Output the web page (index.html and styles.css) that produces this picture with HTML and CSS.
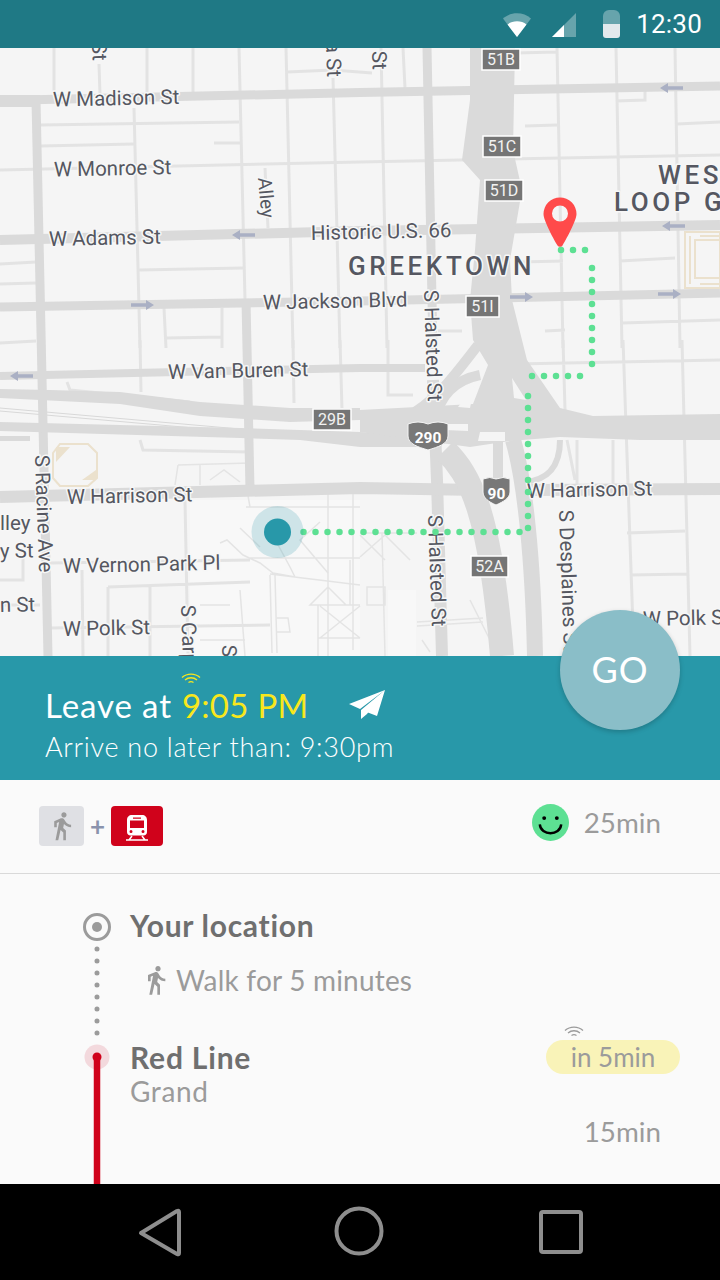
FILE: index.html
```html
<!DOCTYPE html>
<html lang="en">
<head>
<meta charset="utf-8">
<title>Route</title>
<link rel="stylesheet" href="styles.css">
</head>
<body>
<div class="app">
  <header class="status">
    <svg class="st-wifi" width="28" height="24" viewBox="0 0 28 24"><path class="a" d="M0 5.500C7.500-1.400 20.500-1.400 28 5.500L14 24Z"/><path class="w" d="M4.500 11.500C9.500 7.300 18.500 7.300 23.500 11.500L14 24Z"/></svg>
    <svg class="st-signal" width="24" height="24" viewBox="0 0 24 24"><path class="a" d="M24 0V24H0Z"/><path class="w" d="M12 12V24H0Z"/></svg>
    <svg class="st-batt" width="17" height="28" viewBox="0 0 17 28"><path class="a" d="M0 6a6 6 0 0 1 6-6h5a6 6 0 0 1 6 6v8H0Z"/><path class="w" d="M0 14H17V25a3 3 0 0 1-3 3H3a3 3 0 0 1-3-3Z"/></svg>
    <span class="clock">12:30</span>
  </header>

  <section class="map">
    <svg class="map-svg" width="720" height="608" viewBox="0 48 720 608">
      <defs>
        <g id="arrow-l"><path d="M0 0L8-5V-1.800H23V1.800H8V5Z"/></g>
        <g id="arrow-r"><path d="M23 0L15-5V-1.800H0V1.800H15V5Z"/></g>
      </defs>
      <rect class="bg" x="0" y="48" width="720" height="608"/>
      <rect class="bg2" x="190" y="500" width="170" height="156"/>
      <rect class="bg2" x="290" y="590" width="26" height="66"/>
      <rect class="bg2" x="388" y="590" width="28" height="66"/>

      <g class="mn">
        <path d="M54 48V92M99 64L100 95M147 48V92M193 48V92M239 48L245 300M286 48L293 348M333 78L340 348M134 108L140 348"/>
        <path d="M40 125L239 122M40 146L134 144M214 143H240M0 170L360 162L720 155M139 270L243 268M0 264L36 262M0 284L36 283M0 343L36 341M164 308L166 348M222 308V348M166 338L222 337M287 72L333 70L372 73M265 168L268 228"/>
        <path d="M381 48L387 348M403 48L405 88M557 48L563 348M616 48L622 348M675 48L680 348M515 53L557 52M525 126L557 125M616 101L645 100V88M677 124L720 122M620 261L675 258M622 323L720 320M520 262L563 261M545 331L565 330M438 331L462 331"/>
        <path d="M140 340L141 392M293 340L294 403M340 340L342 410M67 382L70 390L190 402M140 440L143 450L250 452"/>
        <path d="M185 500L188 656M82 570L83 656M108 587V656M150 585V656M108 587L250 582M23 557V580H0M0 605H40M50 563L250 560M50 628L270 625"/>
        <path d="M563 340L565 410M623 340L634 656M682 340L690 656M515 364L720 360M567 440L575 480M577 440V490M613 440V490M627 533L685 531M630 575L688 574M388 340V395H413"/>
      </g>
      <path class="track" d="M0 408L240 429M0 411L240 432M240 429L320 432"/>
      <g class="thin">
        <path d="M247 490L250 507M178 465L175 485M178 465L250 463M200 465V485M210 480L224 470L240 482M246 507H360"/>
        <path d="M220 543L227 540L243 555L260 563L273 573L295 577M240 528L260 547M277 543L290 567L295 577M320 522L300 540L328 573M250 558H360M270 574L360 585"/>
        <path d="M328 490V656M353 490V650M350 560V605M328 587L310 605H346ZM318 605H360M318 638H360M318 605V656M320 606L360 638M360 606L320 638"/>
        <path d="M270 575L272 653M275 575L277 653M277 618H288L290 632H277"/>
        <path d="M360 533H417M382 533L385 656M360 557L385 535L410 560M360 535L385 560M367 587H385V605H367ZM417 622L483 618M417 626L483 622M422 640L430 652M470 600L490 640"/>
        <path d="M200 605H230M200 640H245M240 590L245 656"/>
      </g>

      <g class="road" fill="none">
        <path class="r9" d="M0 100.600L360 92.500L720 86"/>
        <path class="r12" d="M0 101H40"/>
        <path class="r10" d="M0 240L360 231L720 225"/>
        <path class="r9" d="M0 307L360 301L720 293"/>
        <path class="r8" d="M0 376L360 368L425 368"/>
        <path class="r9" d="M36 100L48 656"/>
        <path class="r9" d="M246 300L250 490"/>
        <path class="r9" d="M427 48L433 350"/>
        <path class="r12" d="M433 380L437 480L442 656"/>
        <path class="r12" d="M0 497L360 488L480 490"/>
        <path class="r12" d="M530 490L720 489"/>
        <path class="r10" d="M478 345C455 375 440 395 415 412"/>
        <path class="r10" d="M480 375C455 380 440 395 435 420"/>
        <path class="r24" d="M445 450C470 475 490 510 502 656"/>
        <path class="r10" d="M498 440V478"/>
        <path class="r16" d="M513 440C525 480 533 560 535 656"/>
        <path class="r6" d="M560 440C560 470 545 480 525 482"/>
      </g>
      <path class="rf" d="M0 389L50 390L120 392L200 402L290 408L360 408L360 420L290 422L200 416L120 404L0 398Z"/>
      <path class="rf" d="M0 422L240 428L360 432L440 437L440 447L360 447L300 440L240 438L0 431Z"/>
      <path class="rf" d="M0 436H30V441H0Z"/>
      <path class="rf" d="M470 48H515L513 150L522 190L510 260L512 300L527 360L560 408L593 416L720 414V440H640L560 437L510 441L470 447L360 432V410L473 404L488 365L473 340L470 300L475 250L480 180L462 160L470 100Z"/>
      <path class="bg" d="M512 378L526 400L514 398ZM458 407L475 385L470 408ZM445 424H468V431L445 430ZM505 432H480L478 441H505Z"/>

      <g class="tan">
        <path d="M60 444H88L97 453V478L88 486H60L53 478V453Z"/>
        <rect x="685" y="232" width="35" height="56"/>
        <rect x="695" y="240" width="25" height="38"/>
        <path d="M690 236V284M700 236H720M700 284H720"/>
      </g>
      <path class="tanf" d="M56 447H70L56 462ZM96 470V480H82Z"/>

      <g class="lbl">
        <text transform="translate(53 106.500) rotate(-1.200)">W Madison St</text>
        <text transform="translate(54 176.500) rotate(-1.200)">W Monroe St</text>
        <text transform="translate(49 246) rotate(-1.200)">W Adams St</text>
        <text transform="translate(311 240) rotate(-1.200)">Historic U.S. 66</text>
        <text transform="translate(263 309.500) rotate(-1.200)">W Jackson Blvd</text>
        <text transform="translate(168 379) rotate(-1.200)">W Van Buren St</text>
        <text transform="translate(67 504) rotate(-1.200)">W Harrison St</text>
        <text transform="translate(527 498) rotate(-1.200)">W Harrison St</text>
        <text transform="translate(63 573) rotate(-1.200)">W Vernon Park Pl</text>
        <text transform="translate(63 636) rotate(-1.200)">W Polk St</text>
        <text transform="translate(643 626) rotate(-1.200)">W Polk St</text>
        <text transform="translate(0 530)">lley</text>
        <text transform="translate(0 558) rotate(-1.200)">y St</text>
        <text transform="translate(0 612) rotate(-1.200)">n St</text>
        <text transform="translate(35 455) rotate(88)">S Racine Ave</text>
        <text transform="translate(424 290) rotate(88)">S Halsted St</text>
        <text transform="translate(428 515) rotate(88)">S Halsted St</text>
        <text transform="translate(559 510) rotate(88)">S Desplaines St</text>
        <text transform="translate(181 605) rotate(88)">S Carpenter St</text>
        <text transform="translate(222 645) rotate(88)">S Morgan St</text>
        <text class="sm" transform="translate(258 178) rotate(85)">Alley</text>
        <text transform="translate(92 42) rotate(88)">St</text>
        <text transform="translate(326 42) rotate(88)">a St</text>
        <text transform="translate(372 51) rotate(88)">St</text>
      </g>
      <g class="area">
        <text transform="translate(348 275)">GREEKTOWN</text>
        <text transform="translate(658 184)">WEST</text>
        <text transform="translate(614 211)">LOOP GATE</text>
      </g>

      <g class="arr">
        <use href="#arrow-l" x="660" y="88"/>
        <use href="#arrow-l" x="232" y="235"/>
        <use href="#arrow-l" x="662" y="226"/>
        <use href="#arrow-l" x="10" y="376"/>
        <use href="#arrow-r" x="131" y="305"/>
        <use href="#arrow-r" x="510" y="297"/>
        <use href="#arrow-r" x="658" y="294"/>
      </g>

      <g class="ex">
        <rect x="482" y="49" width="38" height="21"/><text x="501" y="65">51B</text>
        <rect x="483" y="136" width="38" height="21"/><text x="502" y="152">51C</text>
        <rect x="485" y="180" width="38" height="21"/><text x="504" y="196">51D</text>
        <rect x="466" y="296" width="33" height="21"/><text x="482.500" y="312">51I</text>
        <rect x="313" y="409" width="38" height="21"/><text x="332" y="425">29B</text>
        <rect x="471" y="556" width="37" height="21"/><text x="489.500" y="572">52A</text>
      </g>
      <g class="shield">
        <path d="M408 424Q418 420 428 424Q438 420 448 424V436C448 444 438 447 428 450C418 447 408 444 408 436Z"/>
        <text x="428" y="443">290</text>
        <path class="sh2" d="M483 479Q490 476 496 479Q503 476 510 479V492C510 498 503 502 496 505C489 502 483 498 483 492Z"/>
        <text x="496.500" y="499">90</text>
      </g>

      <g class="dots">
        <path d="M303.500 532H520"/>
        <path d="M528 528V384"/>
        <path d="M532 376H592"/>
        <path d="M592 364V256"/>
        <path d="M561 250H586"/>
      </g>
      <circle class="me-o" cx="277.500" cy="532" r="26"/>
      <circle class="me" cx="277.500" cy="532" r="13.500"/>
      <path class="pin" fill-rule="evenodd" d="M560 197.500a16.500 16.500 0 0 1 16.500 16.500c0 6-9 23-14 31.500a3 3 0 0 1-5 0c-5-8.500-14-25.500-14-31.500a16.500 16.500 0 0 1 16.500-16.500Zm0 8a8 8 0 1 0 0 16a8 8 0 1 0 0-16Z"/>
    </svg>
  </section>

  <section class="banner">
    <div class="leave"><span class="lead">Leave at</span><span class="time">9:05 PM<svg class="live y" width="20" height="12" viewBox="0 0 20 12"><path d="M1 4.500C6 0 14 0 19 4.500M4 7C7.500 4 12.500 4 16 7M7.500 9.500C9 8.500 11 8.500 12.500 9.500"/></svg></span>
      <svg class="plane" width="38" height="30" viewBox="0 0 38 30"><path d="M37 0L1 14L12 19ZM37 0L16 21L29 26ZM37 0L13 20V29L19 24Z"/></svg>
    </div>
    <div class="arrive">Arrive no later than: 9:30pm</div>
    <button class="go">GO</button>
  </section>

  <section class="summary">
    <div class="modes">
      <span class="chip walk"><svg width="26" height="34" viewBox="2 0 20 24"><path d="M13.500 5.500c1.100 0 2-.9 2-2s-.9-2-2-2-2 .9-2 2 .9 2 2 2zM9.800 8.900L7 23h2.100l1.800-8 2.100 2v6h2v-7.500l-2.100-2 .6-3C14.800 12 16.800 13 19 13v-2c-1.900 0-3.500-1-4.300-2.400l-1-1.600c-.4-.6-1-1-1.700-1-.3 0-.5.1-.8.1L6 8.300V13h2V9.600l1.800-.7"/></svg></span>
      <span class="plus">+</span>
      <span class="chip train"><svg width="52" height="40" viewBox="0 0 52 40"><path class="tw" fill-rule="evenodd" d="M21 9h10c3 0 5 2 5 5v12c0 2-1.500 3.500-3.500 3.500h-13C17.500 29.500 16 28 16 26V14c0-3 2-5 5-5Zm-2 5.500v7.500h14v-7.500Zm3-3v1.200h8v-1.200ZM20 24a1.500 1.500 0 1 0 0 3a1.500 1.500 0 1 0 0-3Zm12 0a1.500 1.500 0 1 0 0 3a1.500 1.500 0 1 0 0-3Z"/><path class="tl" d="M15 34H37M21 30L18 34M31 30L34 34"/></svg></span>
    </div>
    <div class="eta">
      <svg class="smile" width="37" height="37" viewBox="0 0 38 38"><circle class="sm-f" cx="19" cy="19" r="19"/><circle cx="12.500" cy="14.500" r="2"/><circle cx="25.500" cy="14.500" r="2"/><path class="sm-m" d="M8 21C9 33 29 33 30 21"/></svg>
      <span class="eta-t">25min</span>
    </div>
  </section>

  <section class="route">
    <svg class="rail" width="32" height="310" viewBox="0 0 32 310">
      <circle class="r-o" cx="16" cy="53" r="12.500"/>
      <circle class="r-i" cx="16" cy="53" r="5"/>
      <path class="r-d" d="M16 75V160"/>
      <circle class="r-h" cx="16" cy="183" r="12.500"/>
      <path class="r-l" d="M16 183V310"/>
      <circle class="r-c" cx="16" cy="183" r="4.500"/>
    </svg>
    <div class="steps">
      <div class="place">Your location</div>
      <div class="walkrow">
        <svg class="wk" width="26" height="32" viewBox="3 0 18 24"><path d="M13.500 5.500c1.100 0 2-.9 2-2s-.9-2-2-2-2 .9-2 2 .9 2 2 2zM9.800 8.900L7 23h2.100l1.800-8 2.100 2v6h2v-7.500l-2.100-2 .6-3C14.800 12 16.800 13 19 13v-2c-1.900 0-3.500-1-4.300-2.400l-1-1.600c-.4-.6-1-1-1.700-1-.3 0-.5.1-.8.1L6 8.300V13h2V9.600l1.800-.7"/></svg>
        <span>Walk for 5 minutes</span>
      </div>
      <div class="lineblock">
        <div class="line-l">
          <div class="place red">Red Line</div>
          <div class="stop">Grand</div>
        </div>
        <div class="line-r">
          <span class="pill">in 5min<svg class="live g" width="20" height="12" viewBox="0 0 20 12"><path d="M1 4.500C6 0 14 0 19 4.500M4 7C7.500 4 12.500 4 16 7M7.500 9.500C9 8.500 11 8.500 12.500 9.500"/></svg></span>
          <span class="dur">15min</span>
        </div>
      </div>
    </div>
  </section>

  <nav class="nav">
    <svg width="720" height="96" viewBox="0 0 720 96"><path d="M141 49L177 27Q179 26 179 28V69Q179 71 177 70Z"/><circle cx="359" cy="47" r="22.500"/><rect x="541" y="28" width="40" height="40" rx="2"/></svg>
  </nav>
</div>
</body>
</html>
```

FILE: styles.css
```css
* { box-sizing: border-box; }
html, body { margin: 0; padding: 0; }
body { background: #fafafa; font-family: Lato, "Open Sans", sans-serif; }
.app { width: 720px; height: 1280px; display: flex; flex-direction: column; overflow: hidden; position: relative; }

/* status */
.status { height: 48px; flex: none; background: #1f7985; display: flex; align-items: center; justify-content: flex-end; padding-right: 18px; }
.status .a { fill: rgba(255,255,255,.32); }
.status .w { fill: #fff; }
.status .st-batt .w { fill: #e2e9ec; }
.st-wifi { margin-right: 21px; margin-top: 1px; }
.st-signal { margin-right: 27px; margin-top: 1px; }
.st-batt { margin-right: 16px; }
.clock { font: 400 26px/48px Roboto, sans-serif; color: #fff; letter-spacing: .2px; }

/* map */
.map { height: 608px; flex: none; overflow: hidden; }
.map-svg { display: block; }
.bg { fill: #f5f5f5; }
.bg2 { fill: #f8f8f8; }
.mn path { fill: none; stroke: #e3e3e3; stroke-width: 3; }
.track { fill: none; stroke: #d8d8d8; stroke-width: 1; }
.thin path { fill: none; stroke: #e4e4e4; stroke-width: 1.5; }
.road path { stroke: #dadada; }
.r6 { stroke-width: 6; } .r8 { stroke-width: 8; } .r9 { stroke-width: 9; } .r10 { stroke-width: 10; } .r12 { stroke-width: 12; } .r16 { stroke-width: 16; } .r24 { stroke-width: 24; }
.rf { fill: #dadada; }
.tan path, .tan rect { fill: none; stroke: #ebe1cd; stroke-width: 2; }
.tanf { fill: #ebe1cd; }
.lbl text { font: 400 20.500px Roboto, sans-serif; fill: #555761; stroke: #f7f7f7; stroke-width: 3; paint-order: stroke; stroke-linejoin: round; }
.lbl text.sm { font-size: 19px; }
.area text { font: 500 26px Roboto, sans-serif; letter-spacing: 3.600px; fill: #555761; stroke: #f7f7f7; stroke-width: 3; paint-order: stroke; stroke-linejoin: round; }
.arr { fill: #aab0c4; }
.ex rect { fill: #757575; stroke: #fff; stroke-width: 1.500; }
.ex text { font: 400 16px Roboto, sans-serif; fill: #f2f2f2; text-anchor: middle; }
.shield path { fill: #787878; stroke: #f5f5f5; stroke-width: 1; }
.shield text { font: 700 15.500px Roboto, sans-serif; fill: #fff; text-anchor: middle; }
.dots path { fill: none; stroke: #5de093; stroke-width: 6.500; stroke-linecap: round; stroke-dasharray: 0 12; }
.me-o { fill: rgba(40,152,169,.2); }
.me { fill: #2898a9; }
.pin { fill: #ff4a4a; }

/* banner */
.banner { height: 124px; flex: none; background: #2898a9; color: #fff; padding: 27px 0 0 45px; position: relative; }
.leave { font-size: 33px; line-height: 44px; display: flex; align-items: center; white-space: pre; }
.lead { letter-spacing: .9px; }
.time { color: #f8e71c; position: relative; margin-left: 10px; letter-spacing: .3px; }
.live { position: absolute; fill: none; stroke-width: 1.300; }
.live.y { left: -1px; top: -10px; stroke: #f8e71c; }
.live.g { left: 18px; top: -14px; stroke: #9b9b9b; }
.plane { margin-left: 39px; margin-top: -1px; fill: #fff; }
.arrive { font-size: 27px; line-height: 36px; font-weight: 300; letter-spacing: .72px; margin-top: 2px; }
.go { position: absolute; left: 560px; top: -46px; width: 120px; height: 120px; border: 0; border-radius: 50%; background: #8abec8; color: #fff; font: 400 36px Lato, sans-serif; letter-spacing: 1px; box-shadow: 0 2px 5px rgba(0,0,0,.2); padding: 0 0 3px; }

/* summary */
.summary { height: 94px; flex: none; display: flex; align-items: center; justify-content: space-between; padding: 0 59px 2px 39px; border-bottom: 1px solid #d9d9d9; }
.modes { display: flex; align-items: center; }
.chip { display: flex; align-items: center; justify-content: center; height: 40px; border-radius: 4px; }
.chip.walk { width: 45px; background: #dfe0e4; fill: #9b9b9b; }
.chip.train { width: 52px; background: #d0021b; }
.tw { fill: #fff; }
.tl { stroke: #fff; stroke-width: 1.500; fill: none; }
.plus { width: 27px; text-align: center; font-size: 26px; line-height: 40px; color: #8a93ad; font-weight: 700; }
.eta { display: flex; align-items: center; gap: 15px; margin-bottom: 6px; }
.smile { display: block; }
.sm-f { fill: #5de093; }
.sm-m { fill: none; stroke: #000; stroke-width: 2.500; }
.eta-t { font-size: 27.800px; color: #9b9b9b; }

/* route */
.route { flex: 1; display: flex; padding-left: 81px; min-height: 0; overflow: hidden; }
.rail { flex: none; display: block; }
.r-o { fill: none; stroke: #9b9b9b; stroke-width: 3; }
.r-i { fill: #9b9b9b; }
.r-d { fill: none; stroke: #9b9b9b; stroke-width: 5; stroke-linecap: round; stroke-dasharray: 0 12; }
.r-h { fill: #f3d9dd; }
.r-l { stroke: #d0021b; stroke-width: 6.500; fill: none; }
.r-c { fill: #d0021b; }
.steps { flex: 1; padding: 31px 40px 0 17px; color: #9b9b9b; }
.place { font-size: 30px; line-height: 40px; font-weight: 700; color: #6f6f6f; letter-spacing: .7px; }
.place.red { letter-spacing: .8px; }
.walkrow { display: flex; align-items: center; margin: 15px 0 0 13px; font-size: 28px; line-height: 40px; letter-spacing: .2px; }
.wk { fill: #9b9b9b; margin-right: 7px; }
.lineblock { display: flex; justify-content: space-between; margin-top: 37px; }
.stop { font-size: 28px; line-height: 28px; letter-spacing: .6px; }
.line-r { display: flex; flex-direction: column; align-items: flex-end; }
.pill { position: relative; width: 134px; height: 34px; border-radius: 17px; background: #f9f3b8; font-size: 26px; line-height: 34px; text-align: center; color: #9b9b9b; margin-top: 3px; }
.dur { font-size: 27.800px; line-height: 36px; margin: 40px 19px 0 0; }

/* nav */
.nav { height: 96px; flex: none; background: #000; }
.nav svg { display: block; fill: none; stroke: #8e8e8e; stroke-width: 4; stroke-linejoin: round; }
```
